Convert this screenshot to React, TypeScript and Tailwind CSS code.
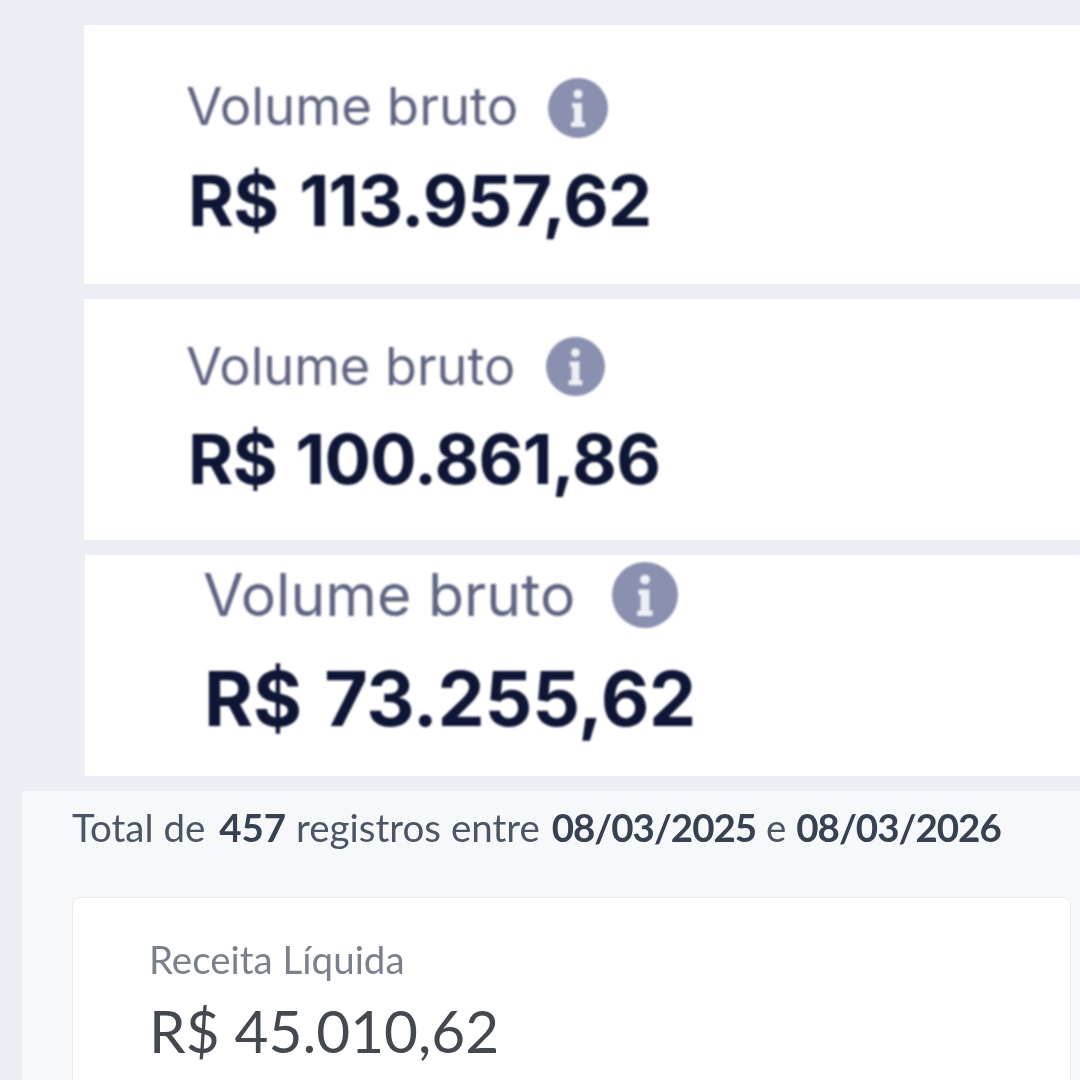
const InfoIcon = ({ className }: { className: string }) => (
  <svg viewBox="0 0 60 60" className={className}>
    <circle cx="30" cy="30" r="30" fill="#8b90b0" />
    <circle cx="30" cy="16" r="4.500" fill="#eef0f5" />
    <path d="M24 25h10v19h3v5h-14v-5h3v-14h-2z" fill="#eef0f5" />
  </svg>
);

const volumeCards = [
  { value: "R$ 113.957,62", card: "h-[259px] ml-[84px] pl-[102px] pt-[47px]", label: "text-[52.7px] leading-[68px]", gap: "gap-[30px]", icon: "w-[60px] h-[60px] mt-[4px]", amount: "text-[70px] leading-[86px] mt-[18px] ml-[2px] tracking-[-0.75px] [word-spacing:5px]" },
  { value: "R$ 100.861,86", card: "h-[241px] ml-[84px] mt-[15px] pl-[102px] pt-[33px]", label: "text-[52.2px] leading-[68px]", gap: "gap-[31px]", icon: "w-[59px] h-[59px]", amount: "text-[69px] leading-[86px] mt-[16px] ml-[2px] tracking-[-0.75px] [word-spacing:3px]" },
  { value: "R$ 73.255,62", card: "h-[221px] ml-[85px] mt-[15px] pl-[118px] pt-[5px]", label: "text-[59px] leading-[70px]", gap: "gap-[37px]", icon: "w-[66px] h-[66px]", amount: "text-[75px] leading-[92px] mt-[23px] ml-[1px] tracking-[-0.3px] [word-spacing:5px]" },
];

export default function App() {
  return (
    <div className="w-[1080px] h-[1080px] overflow-hidden bg-[#ebeff4] pt-[25px]">
      {volumeCards.map((card) => (
        <div key={card.value} className={`bg-white ${card.card}`}>
          <div className={`flex items-center ${card.gap}`}>
            <span className={`font-['Inter',sans-serif] font-normal text-[#5f6480] blur-[1px] ${card.label}`}>
              Volume bruto
            </span>
            <InfoIcon className={`blur-[1px] ${card.icon}`} />
          </div>
          <div className={`font-['Inter',sans-serif] font-bold text-[#0f1535] blur-[1px] ${card.amount}`}>
            {card.value}
          </div>
        </div>
      ))}

      <div className="mt-[15px] ml-[22px] h-[400px] bg-[#f6f8fa] pl-[50px] pr-[9px] pt-[13px]">
        <p className="font-['Lato',sans-serif] text-[38.5px] leading-[46px] text-[#4b5563] whitespace-nowrap blur-[0.5px]">
          Total de <b className="ml-[4px] text-[#374151]">457</b> registros entre{" "}
          <b className="ml-[2px] text-[#374151] tracking-[-1px]">08/03/2025</b> e{" "}
          <b className="text-[#374151] tracking-[-1px]">08/03/2026</b>
        </p>
        <div className="mt-[47px] h-[300px] rounded-[8px] border border-[#e7e9ee] bg-white pl-[76px] pt-[37px] font-['Lato',sans-serif]">
          <div className="text-[38.5px] leading-[48px] text-[#7b818c] blur-[0.5px]">Receita Líquida</div>
          <div className="mt-[12px] text-[58.5px] leading-[70px] text-[#44484f] blur-[0.5px]">R$ 45.010,62</div>
        </div>
      </div>
    </div>
  );
}
